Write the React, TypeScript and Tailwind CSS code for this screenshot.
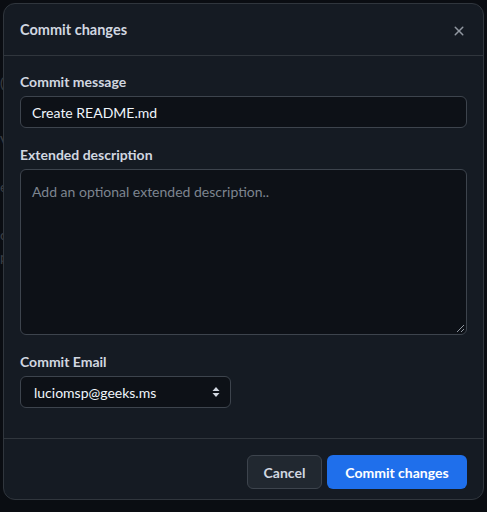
import React from "react";

export default function App() {
  return (
    <div className="relative h-[512px] w-[487px] overflow-hidden bg-[#0a0d12]" style={{ fontFamily: 'Lato, "Noto Sans", "Liberation Sans", sans-serif' }}>
      <div className="absolute left-0 top-[72px] text-[14px] text-[#3a3f46]">(</div>
      <div className="absolute left-0 top-[130px] text-[14px] text-[#3a3f46]">V</div>
      <div className="absolute left-0 top-[176px] text-[14px] text-[#3a3f46]">e</div>
      <div className="absolute left-0 top-[224px] text-[14px] text-[#3a3f46]">c</div>
      <div className="absolute left-0 top-[246px] text-[14px] text-[#3a3f46]">p</div>
      <div className="absolute left-[3px] top-[3px] flex h-[497px] w-[481px] flex-col rounded-[12px] border border-[#30363d] bg-[#151b23]">
        <div className="flex h-[52px] items-center justify-between border-b border-[#30363d] pl-[16px] pr-[16px]">
          <span className="text-[14.5px] font-bold text-[#d1d7e0]">Commit changes</span>
          <svg width="16" height="16" viewBox="0 0 16 16" fill="#9198a1" className="mt-[3px]">
            <path d="M3.72 3.72a.75.75 0 0 1 1.06 0L8 6.94l3.22-3.22a.749.749 0 0 1 1.275.326.749.749 0 0 1-.215.734L9.06 8l3.22 3.22a.749.749 0 0 1-.326 1.275.749.749 0 0 1-.734-.215L8 9.06l-3.22 3.22a.751.751 0 0 1-1.042-.018.751.751 0 0 1-.018-1.042L6.94 8 3.72 4.78a.75.75 0 0 1 0-1.06Z" />
          </svg>
        </div>
        <div className="flex flex-1 flex-col px-[16px] pt-[15px]">
          <label className="text-[14px] font-bold text-[#d1d7e0]">Commit message</label>
          <div className="mt-[4px] flex h-[32px] items-center rounded-[6px] border border-[#3d444d] bg-[#0d1117] px-[11px] text-[14px] text-[#f0f6fc]">
            Create README.md
          </div>
          <label className="mt-[16px] text-[14px] font-bold text-[#d1d7e0]">Extended description</label>
          <div className="relative mt-[4px] h-[166px] rounded-[6px] border border-[#3d444d] bg-[#0d1117] px-[11px] pt-[11px] text-[14px] text-[#7d8590]">
            Add an optional extended description..
            <svg width="10" height="10" viewBox="0 0 10 10" className="absolute bottom-[1px] right-[1px]" stroke="#9198a1" strokeWidth="1">
              <path d="M9 2 L2 9 M9 6 L6 9" />
            </svg>
          </div>
          <label className="mt-[16px] text-[14px] font-bold text-[#d1d7e0]">Commit Email</label>
          <div className="mt-[4px] flex h-[32px] w-[211px] items-center justify-between rounded-[6px] border border-[#3d444d] bg-[#0d1117] pl-[13px] pr-[10px] text-[14px] text-[#f0f6fc]">
            <span>luciomsp@geeks.ms</span>
            <svg width="8" height="10" viewBox="0 0 8 10" fill="#d1d7e0">
              <path d="M4 0 L7.5 4 H0.5 Z M4 10 L0.5 6 H7.5 Z" />
            </svg>
          </div>
        </div>
        <div className="flex h-[61px] items-start justify-end gap-[5px] border-t border-[#30363d] px-[16px] pt-[16px]">
          <button className="h-[34px] w-[75px] rounded-[6px] border border-[#3d444d] bg-[#212830] text-[14px] font-bold text-[#d1d7e0]">Cancel</button>
          <button className="h-[34px] w-[140px] rounded-[6px] bg-[#1f6feb] text-[14px] font-bold text-white">Commit changes</button>
        </div>
      </div>
    </div>
  );
}
